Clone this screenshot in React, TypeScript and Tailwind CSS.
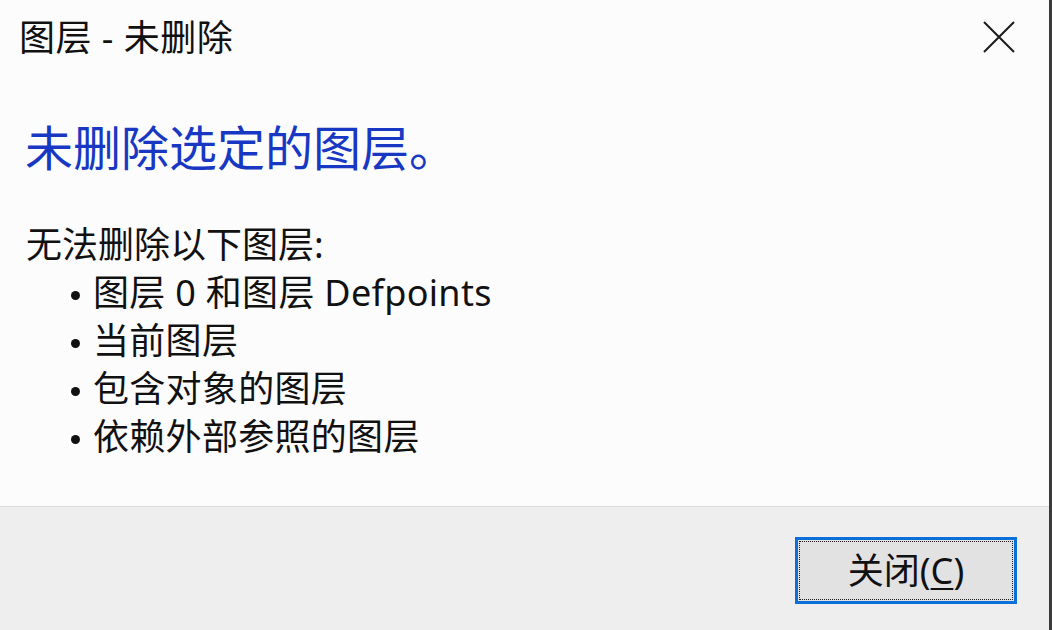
import React from "react";

const font = { fontFamily: '"Noto Sans", "Noto Sans CJK SC", sans-serif' };

export default function App() {
  const items = ["图层 0 和图层 Defpoints", "当前图层", "包含对象的图层", "依赖外部参照的图层"];
  return (
    <div
      className="w-[1052px] h-[630px] flex flex-col bg-[#fcfcfd] border-r-[3px] border-[#3a3a3a] text-[#111] overflow-hidden"
      style={font}
    >
      <div className="flex-1 flex flex-col">
        <div className="flex items-start justify-between pt-[14px] pl-[19px] pr-[34px]">
          <div className="text-[36px] leading-[48px] tracking-[0.5px]">图层 - 未删除</div>
          <svg width="32" height="32" viewBox="0 0 32 32" className="mt-[7px]">
            <path d="M1 1 L31 31 M31 1 L1 31" stroke="#1a1a1a" strokeWidth="2" fill="none" />
          </svg>
        </div>
        <div className="mt-[56px] pl-[25px] text-[48px] leading-[60px] text-[#1838c4]">未删除选定的图层。</div>
        <div className="mt-[43px] pl-[26px] text-[36px] leading-[48px]">
          <div>无法删除以下图层:</div>
          {items.map((t) => (
            <div key={t} className="flex items-center pl-[45px]">
              <span className="w-[9px] h-[9px] rounded-full bg-[#111] mr-[13px] mt-[4px]" />
              <span className="tracking-[0.3px]">{t}</span>
            </div>
          ))}
        </div>
      </div>
      <div className="h-[124px] border-t border-[#dcdcdc] bg-[#efeeef] flex justify-end pt-[30px] pr-[32px]">
        <button className="w-[222px] h-[67px] border-[3px] border-[#0b6fd9] bg-[#e3e2e3] p-[1px]">
          <div className="w-full h-full border border-dotted border-[#1a1a1a] flex items-center justify-center text-[36px] leading-none text-[#111]">
            关闭(<span className="underline underline-offset-[4px] decoration-[2px]">C</span>)
          </div>
        </button>
      </div>
    </div>
  );
}
